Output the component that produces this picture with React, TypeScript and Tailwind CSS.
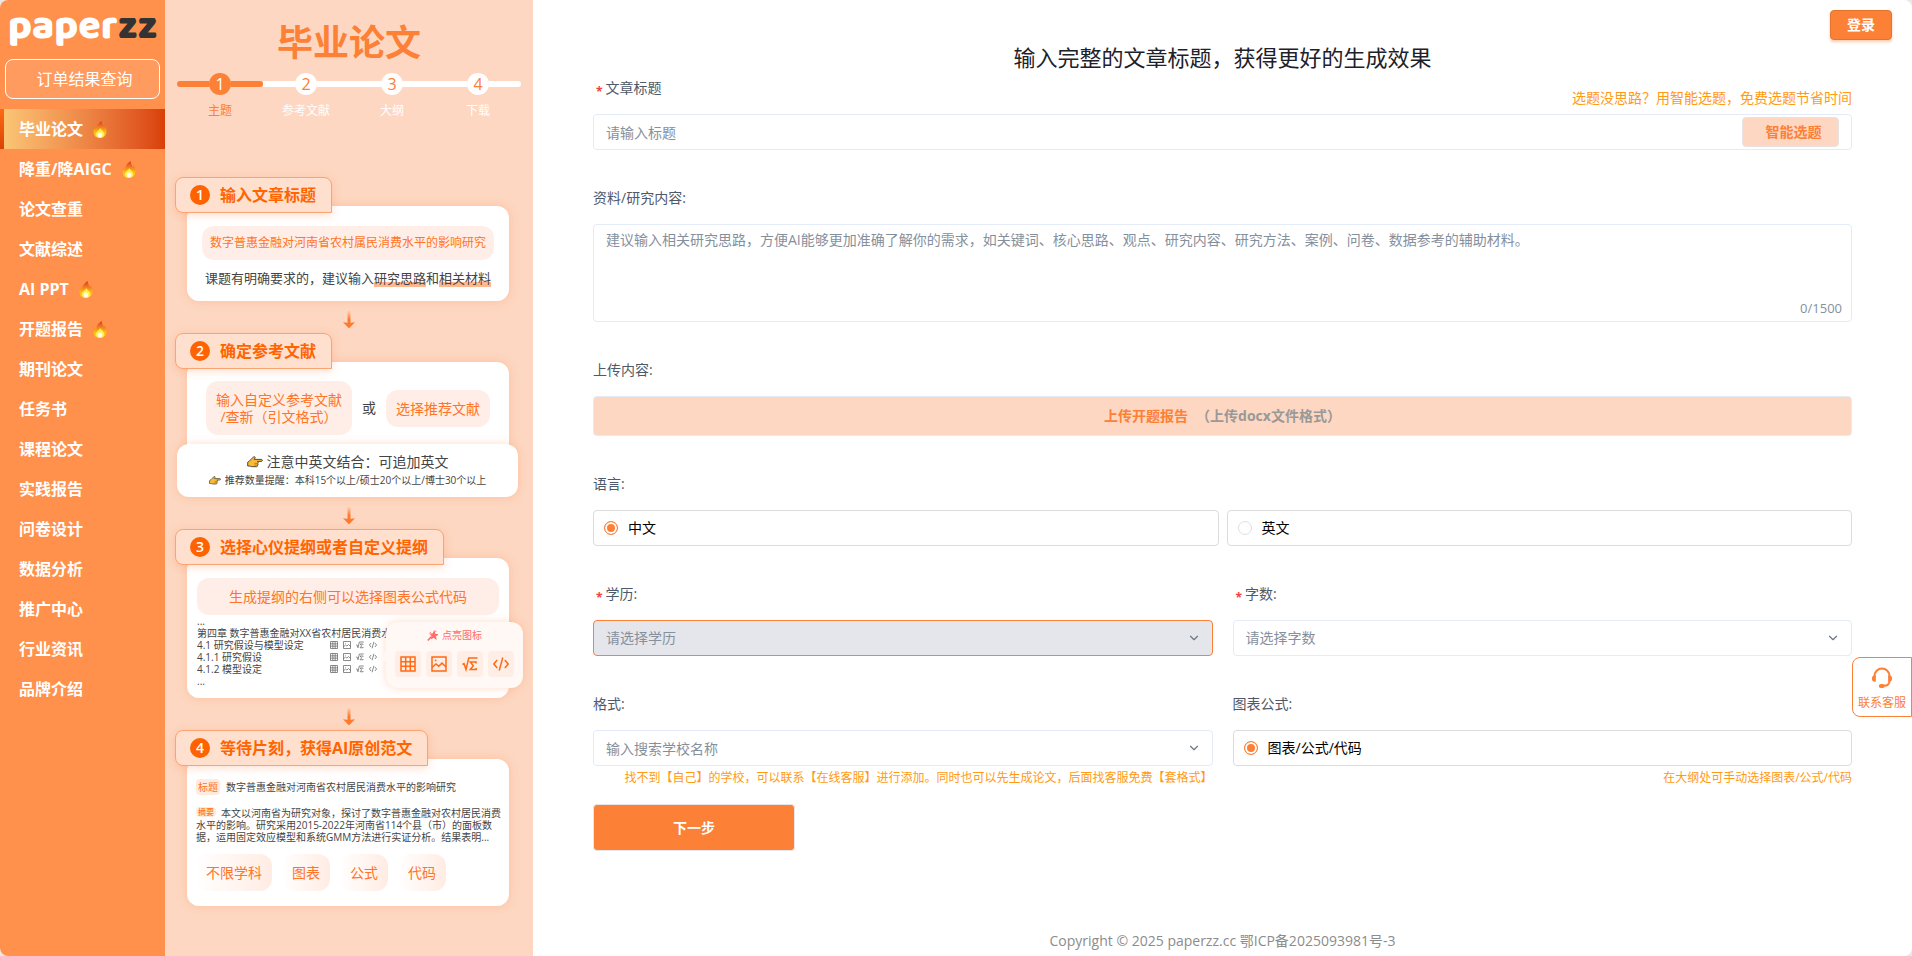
import { useState } from "react";
import type { ReactNode } from "react";
import { ChevronDown } from "lucide-react";
import clsx from "clsx";

const MENU = [
  { label: "毕业论文", hot: true },
  { label: "降重/降AIGC", hot: true },
  { label: "论文查重" },
  { label: "文献综述" },
  { label: "AI PPT", hot: true },
  { label: "开题报告", hot: true },
  { label: "期刊论文" },
  { label: "任务书" },
  { label: "课程论文" },
  { label: "实践报告" },
  { label: "问卷设计" },
  { label: "数据分析" },
  { label: "推广中心" },
  { label: "行业资讯" },
  { label: "品牌介绍" },
];

const STEPS = ["主题", "参考文献", "大纲", "下载"];

const OUTLINE = [
  "4.1 研究假设与模型设定",
  "4.1.1 研究假设",
  "4.1.2 模型设定",
];

/* ---------- Icons ---------- */

function FireIcon() {
  return (
    <svg viewBox="0 0 14 17" className="h-[17px] w-[14px]" aria-hidden="true">
      <defs>
        <linearGradient id="fire" x1="0" y1="0" x2="0" y2="1">
          <stop offset="0" stopColor="#d8362a" />
          <stop offset="0.4" stopColor="#f3861c" />
          <stop offset="0.65" stopColor="#fdbb12" />
          <stop offset="1" stopColor="#fdd835" />
        </linearGradient>
      </defs>
      <path
        d="M8.6 0C9 2.6 9.600 4 11 6c.4-.4.6-.9.6-1.600C13 6.200 13.600 8.400 13.500 10.500 13.300 14.500 10.600 17 7 17S.5 14.500.500 10.900c0-1.800.5-3.200 1.100-4.300.3.9.7 1.500 1.300 1.900C3.200 4.800 5.200 2.200 8.600 0z"
        fill="url(#fire)"
      />
      <path
        d="M7.200 7c.3 1.500 4 3 4 6.200 0 2.200-1.900 3.600-4.100 3.600S2.900 15.400 2.900 13.300C2.900 10.700 6.600 9.400 7.200 7z"
        fill="#fff04d"
      />
      <ellipse cx="7" cy="14" rx="2.300" ry="2.400" fill="#fffdf0" />
    </svg>
  );
}

function HandIcon({ className }: { className: string }) {
  return (
    <svg viewBox="0 0 16 12" className={className} aria-hidden="true">
      <path
        d="M.700 6.200c1.600-.6 2.300-1.800 3.400-3C5 2.200 6.300.900 7.300.700c.8-.1 1.100.7.700 1.400L7.200 3.400h7.100c1.400 0 1.400 2 0 2H10.500c.9.300 1 1.500.2 1.900.7.400.6 1.600-.2 1.800.3.700-.1 1.600-1.100 1.600H5.200c-1.500 0-2-.8-4.500-.7z"
        fill="#fcb932"
        stroke="#3a3a3a"
        strokeWidth="0.900"
        strokeLinejoin="round"
      />
      <path d="M7.500 7.300h3M7.300 9.100h3" stroke="#8a5a10" strokeWidth="0.600" />
    </svg>
  );
}

function TableIcon({ className }: { className: string }) {
  return (
    <svg viewBox="0 0 16 16" className={className} fill="none" stroke="currentColor" strokeWidth="1.500" aria-hidden="true">
      <path d="M1 1h14v14H1zM1 5.700h14M1 10.300h14M5.700 1v14M10.300 1v14" />
    </svg>
  );
}

function PictureIcon({ className }: { className: string }) {
  return (
    <svg viewBox="0 0 16 16" className={className} fill="none" stroke="currentColor" strokeWidth="1.500" aria-hidden="true">
      <path d="M1 1h14v14H1z" />
      <path d="M1 11.500 5 8l2.800 2.200L11 7l4 4" />
      <circle cx="4.600" cy="4.400" r="0.900" fill="currentColor" stroke="none" />
    </svg>
  );
}

function FormulaIcon({ className }: { className: string }) {
  return (
    <svg viewBox="0 0 16 16" className={className} fill="none" stroke="currentColor" strokeWidth="1.500" aria-hidden="true">
      <path d="M.5 8.500 2 7.700l2 5.800L6.700 2H15.500" />
      <path d="M14 7.500V6H8.300l3 3.700-3 3.800H14.200V12" />
    </svg>
  );
}

function CodeIcon({ className }: { className: string }) {
  return (
    <svg viewBox="0 0 16 16" className={className} fill="none" stroke="currentColor" strokeWidth="1.500" aria-hidden="true">
      <path d="M4.200 4 .8 8l3.400 4M11.800 4l3.400 4-3.400 4M9.800 1.500 6.200 14.500" />
    </svg>
  );
}

function WandIcon() {
  return (
    <svg viewBox="0 0 12 12" className="size-[11px] text-[#fe6c6c]" fill="none" stroke="currentColor" strokeWidth="1.300" aria-hidden="true">
      <path d="M.8 11.400 5 7" strokeWidth="1.700" />
      <path d="M4 4.500h2.500l1.300-2.800.8 2.900 2.800.4-2.300 1.600.6 2.900-2.300-1.600L5 9l.8-2.600z" fill="currentColor" />
      <path d="M3.200 2.300 4 3M10 1l-.6.9" />
    </svg>
  );
}

function HeadsetIcon() {
  return (
    <svg viewBox="0 0 22 22" className="size-[22px]" aria-hidden="true">
      <path
        d="M3.500 10.500V9a7.500 7.500 0 0 1 15 0v4.500c0 3.200-2 5.300-5.500 5.300"
        fill="none"
        stroke="currentColor"
        strokeWidth="2"
      />
      <path
        d="M3.500 8.200h1.300v6.600H3.500C2 14.800.9 13.500.9 11.500S2 8.200 3.500 8.200zM18.500 8.200h-1.300v6.600h1.300c1.500 0 2.600-1.300 2.600-3.300s-1.100-3.300-2.600-3.300z"
        fill="currentColor"
      />
      <rect x="7.800" y="17" width="6" height="4" rx="2" fill="currentColor" />
    </svg>
  );
}

function DownArrow() {
  return (
    <svg viewBox="0 0 12 17" className="mx-auto mt-[10px] mb-[5px] h-[17px] w-3" aria-hidden="true">
      <defs>
        <linearGradient id="arrow" x1="0" y1="0" x2="0" y2="1">
          <stop offset="0" stopColor="#ff7a2c" stopOpacity="0.1" />
          <stop offset="0.7" stopColor="#ff7a2c" />
        </linearGradient>
      </defs>
      <path d="M4.500 0h3v12h-3z" fill="url(#arrow)" />
      <path d="M0 11.200 6 12l6-.8L6.600 16.700a.8.8 0 0 1-1.200 0z" fill="#ff7a2c" />
    </svg>
  );
}

/* ---------- Sidebar ---------- */

function Sidebar() {
  return (
    <aside className="w-[165px] shrink-0 bg-[#ff914d]">
      <a
        href="#"
        className="block h-[59px] pl-[8px] font-['Baloo_2','Open_Sans',sans-serif] text-[41px] leading-[53px] font-extrabold text-white"
      >
        paper<span className="text-[#333333]">zz</span>
      </a>
      <button className="mx-[5px] h-10 w-[155px] rounded-lg border border-white bg-[#ff9b5f] pl-1 text-base text-white">
        订单结果查询
      </button>
      <nav className="mt-[10px]">
        {MENU.map((item, i) => (
          <a
            key={item.label}
            href="#"
            className={clsx(
              "flex h-10 items-center gap-[10px] text-base font-bold text-white",
              i === 0 && "bg-linear-to-r from-[#fbc878] to-[#d93f06]",
            )}
          >
            <span
              className={clsx(
                "h-full w-1",
                i === 0 && "bg-linear-to-b from-[#fd6a12] to-[#db4206]",
              )}
            />
            <span className="pl-[5px]">{item.label}</span>
            {item.hot && <FireIcon />}
          </a>
        ))}
      </nav>
    </aside>
  );
}

/* ---------- Guide panel ---------- */

function Stepper() {
  return (
    <ol className="mx-3 mt-2 flex">
      {STEPS.map((step, i) => (
        <li key={step} className="flex-1">
          <div className="flex items-center">
            <span
              className={clsx(
                "h-1.5 flex-1",
                i === 0 ? "rounded-l-full bg-[#fc8036]" : "bg-white",
              )}
            />
            <span
              className={clsx(
                "flex size-[22px] items-center justify-center rounded-full text-base leading-none",
                i === 0 ? "bg-[#fc8036] text-white" : "bg-white text-[#fc8036]",
              )}
            >
              {i + 1}
            </span>
            <span
              className={clsx(
                "h-1.5 flex-1",
                i === 0 ? "rounded-r-full bg-[#fc8036]" : "bg-white",
                i === STEPS.length - 1 && "rounded-r-full",
              )}
            />
          </div>
          <p
            className={clsx(
              "mt-2 text-center text-xs leading-4",
              i === 0 ? "text-[#fc8036]" : "text-white",
            )}
          >
            {step}
          </p>
        </li>
      ))}
    </ol>
  );
}

interface GuideCardProps {
  index: number;
  title: string;
  className?: string;
  children: ReactNode;
}

function GuideCard({ index, title, className, children }: GuideCardProps) {
  return (
    <section>
      <h2 className="relative z-10 ml-[10px] flex h-9 w-fit items-center gap-[10px] rounded-t-lg rounded-bl-lg border border-[#fba473] bg-[#ffdfcd] pr-[15px] pl-[14px] text-base font-bold text-[#ff6400] shadow-[0_2px_8px_rgba(255,120,50,0.25)]">
        <span className="flex size-5 items-center justify-center rounded-full bg-[#ff6200] text-sm leading-none font-semibold text-white">
          {index}
        </span>
        {title}
      </h2>
      <div
        className={clsx(
          "relative mr-6 ml-[22px] -mt-[7px] rounded-xl bg-white shadow-[0_0_10px_rgba(255,140,80,0.3)]",
          className,
        )}
      >
        {children}
      </div>
    </section>
  );
}

function GuidePanel() {
  return (
    <div className="w-[368px] shrink-0 bg-[#fdd7c1] pt-[21px]">
      <h1 className="text-center text-4xl leading-[44px] font-bold text-[#fc8036]">
        毕业论文
      </h1>
      <Stepper />

      <div className="mt-[58px] text-[#444444]">
        <GuideCard index={1} title="输入文章标题" className="pt-5 pb-[13px] text-center">
          <p className="mx-[15px] rounded-xl bg-[#ffeee7] text-xs leading-[34px] text-[#ff7426]">
            数字普惠金融对河南省农村属民消费水平的影响研究
          </p>
          <p className="mt-2 text-[13px] leading-5">
            课题有明确要求的，建议输入
            <span className="bg-linear-to-t from-[#ffb78f] from-25% to-transparent to-25%">研究思路</span>
            和
            <span className="bg-linear-to-t from-[#ffb78f] from-25% to-transparent to-25%">相关材料</span>
          </p>
        </GuideCard>
        <DownArrow />

        <GuideCard index={2} title="确定参考文献" className="pt-[19px] pb-5">
          <div className="flex items-center justify-center gap-[10px] text-sm text-[#ff7426]">
            <p className="rounded-xl bg-[#ffeee7] px-[10px] py-[10px] text-center leading-[17px]">
              输入自定义参考文献
              <br />
              /查新（引文格式）
            </p>
            <span className="text-[#444444]">或</span>
            <p className="rounded-xl bg-[#ffeee7] px-[10px] leading-[37px]">
              选择推荐文献
            </p>
          </div>
        </GuideCard>
        <div className="relative mr-[15px] ml-3 -mt-[11px] rounded-xl bg-white pt-[9px] pb-2 shadow-[0_0_8px_rgba(255,140,80,0.3)]">
          <p className="flex items-center justify-center gap-1 text-sm leading-[18px]">
            <HandIcon className="h-3 w-4" />
            注意中英文结合：可追加英文
          </p>
          <p className="flex items-center justify-center gap-1 text-[10px] leading-[18px]">
            <HandIcon className="h-[9px] w-3" />
            推荐数量提醒：本科15个以上/硕士20个以上/博士30个以上
          </p>
        </div>
        <DownArrow />

        <GuideCard index={3} title="选择心仪提纲或者自定义提纲" className="px-[10px] pt-5 pb-[11px]">
          <p className="rounded-xl bg-[#ffeee7] text-center text-sm leading-[37px] text-[#ff7426]">
            生成提纲的右侧可以选择图表公式代码
          </p>
          <div className="text-[10px] leading-3">
            <p>...</p>
            <p className="w-[190px] overflow-hidden whitespace-nowrap">
              第四章 数字普惠金融对XX省农村居民消费水
            </p>
            {OUTLINE.map((line) => (
              <div key={line} className="flex w-[180px] items-center justify-between">
                <span>{line}</span>
                <span className="flex gap-[5px] text-[#666666]">
                  <TableIcon className="size-2" />
                  <PictureIcon className="size-2" />
                  <FormulaIcon className="size-2" />
                  <CodeIcon className="size-2" />
                </span>
              </div>
            ))}
            <p>...</p>
          </div>
          {/* Floating icon picker */}
          <div className="absolute top-16 -right-[14px] h-[66px] w-[137px] rounded-xl bg-[#fff8f4] shadow-[0_0_8px_rgba(255,140,80,0.3)]">
            <span className="absolute top-[30px] -left-[6px] border-y-[5px] border-r-[6px] border-y-transparent border-r-[#fff8f4]" />
            <p className="mt-[5px] flex items-center justify-center gap-1 text-[10px] leading-4 text-[#fe6c6c]">
              <WandIcon />
              点亮图标
            </p>
            <div className="mt-2 flex justify-center gap-[5px] text-[#ff6a13]">
              <span className="flex size-[26px] items-center justify-center rounded-sm bg-[#ffeee6]">
                <TableIcon className="size-4" />
              </span>
              <span className="flex size-[26px] items-center justify-center rounded-sm bg-[#ffeee6]">
                <PictureIcon className="size-4" />
              </span>
              <span className="flex size-[26px] items-center justify-center rounded-sm bg-[#ffeee6]">
                <FormulaIcon className="size-4" />
              </span>
              <span className="flex size-[26px] items-center justify-center rounded-sm bg-[#ffeee6]">
                <CodeIcon className="size-4" />
              </span>
            </div>
          </div>
        </GuideCard>
        <DownArrow />

        <GuideCard index={4} title="等待片刻，获得AI原创范文" className="pt-5 pr-[7px] pb-[15px] pl-[9px]">
          <p className="flex gap-1.5 text-[10px] leading-4">
            <span className="rounded-sm bg-[#ffeae0] px-0.5 text-[#ff7426]">标题</span>
            数字普惠金融对河南省农村居民消费水平的影响研究
          </p>
          <p className="mt-3 text-[10px] leading-3">
            <span className="mr-[5px] inline-block rounded-sm bg-[#ffeae0] px-0.5 align-top text-[8px] leading-[10px] font-medium text-[#ff7426]">
              摘要
            </span>
            本文以河南省为研究对象，探讨了数字普惠金融对农村居民消费水平的影响。研究采用2015-2022年河南省114个县（市）的面板数据，运用固定效应模型和系统GMM方法进行实证分析。结果表明...
          </p>
          <div className="mt-[11px] flex gap-[10px] text-sm leading-[37px] text-[#ff7426]">
            {["不限学科", "图表", "公式", "代码"].map((tag) => (
              <span
                key={tag}
                className="rounded-xl bg-linear-to-r from-white to-[#ffece3] px-[10px]"
              >
                {tag}
              </span>
            ))}
          </div>
        </GuideCard>
      </div>
    </div>
  );
}

/* ---------- Form ---------- */

interface FieldProps {
  label: string;
  htmlFor?: string;
  required?: boolean;
  hint?: string;
  children: ReactNode;
}

function Field({ label, htmlFor, required, hint, children }: FieldProps) {
  return (
    <div>
      <div className="mb-[10px] flex h-8 items-center justify-between">
        <label htmlFor={htmlFor} className="flex items-center text-sm text-[#4e5969]">
          {required && <span className="mr-[3px] ml-[3px] pt-2 text-xs leading-none font-bold text-[#f53f3f]">*</span>}
          {label}
        </label>
        {hint && (
          <span className="self-end text-sm leading-3 text-[#ff9a14]">{hint}</span>
        )}
      </div>
      {children}
    </div>
  );
}

interface RadioBoxProps {
  label: string;
  name: string;
  checked: boolean;
  onSelect: () => void;
}

function RadioBox({ label, name, checked, onSelect }: RadioBoxProps) {
  return (
    <label className="flex h-9 items-center gap-[10px] rounded border border-[#dcdcdc] px-[10px] text-sm text-black">
      <input
        type="radio"
        name={name}
        checked={checked}
        onChange={onSelect}
        className="size-[14px] appearance-none rounded-full border border-[#dcdfe6] bg-white checked:border-[#fc8036] checked:bg-[#fc8036] checked:shadow-[inset_0_0_0_2px_white]"
      />
      {label}
    </label>
  );
}

interface SelectBoxProps {
  id: string;
  placeholder: string;
  active?: boolean;
}

function SelectBox({ id, placeholder, active }: SelectBoxProps) {
  return (
    <div className="relative">
      <select
        id={id}
        className={clsx(
          "block h-9 w-full appearance-none rounded-sm border px-3 text-sm text-[#86909c] outline-none",
          active ? "border-[#fc8036] bg-[#e5e6eb]" : "border-[#e4ebf8] bg-white",
        )}
      >
        <option>{placeholder}</option>
      </select>
      <ChevronDown className="pointer-events-none absolute top-[11px] right-3 size-[14px] text-[#6b7785]" />
    </div>
  );
}

function PaperForm() {
  const [lang, setLang] = useState("中文");
  const [content, setContent] = useState("");

  return (
    <form className="flex flex-col gap-8 px-[60px]" onSubmit={(e) => e.preventDefault()}>
      <Field
        label="文章标题"
        htmlFor="title"
        required
        hint="选题没思路？用智能选题，免费选题节省时间"
      >
        <div className="flex h-9 items-center rounded-sm border border-[#e4ebf8] pr-3">
          <input
            id="title"
            placeholder="请输入标题"
            className="h-full flex-1 px-3 text-sm outline-none placeholder:text-[#86909c]"
          />
          <button
            type="button"
            className="h-[30px] w-[97px] rounded border border-[#e8e3e2] bg-[#fdd7c1] pl-1.5 text-sm font-bold text-[#fc8036]"
          >
            智能选题
          </button>
        </div>
      </Field>

      <Field label="资料/研究内容:" htmlFor="content">
        <div className="relative">
          <textarea
            id="content"
            maxLength={1500}
            value={content}
            onChange={(e) => setContent(e.target.value)}
            placeholder="建议输入相关研究思路，方便AI能够更加准确了解你的需求，如关键词、核心思路、观点、研究内容、研究方法、案例、问卷、数据参考的辅助材料。"
            className="block h-[98px] w-full resize-none rounded-sm border border-[#e4ebf8] px-3 py-1 text-sm leading-[22px] outline-none placeholder:text-[#86909c]"
          />
          <span className="absolute right-[10px] bottom-1 text-[13px] leading-5 text-[#86909c]">
            {content.length}/1500
          </span>
        </div>
      </Field>

      <Field label="上传内容:" htmlFor="upload">
        <button
          id="upload"
          type="button"
          className="block h-10 w-full rounded border border-[#e4ebf3] bg-[#fdd7c1] text-sm font-bold text-[#999999]"
        >
          <span className="mr-2 text-[#fc8036]">上传开题报告</span>
          （上传docx文件格式）
        </button>
      </Field>

      <Field label="语言:">
        <div className="grid grid-cols-2 gap-2">
          {["中文", "英文"].map((item) => (
            <RadioBox
              key={item}
              name="lang"
              label={item}
              checked={lang === item}
              onSelect={() => setLang(item)}
            />
          ))}
        </div>
      </Field>

      <div className="grid grid-cols-2 gap-5">
        <Field label="学历:" htmlFor="degree" required>
          <SelectBox id="degree" placeholder="请选择学历" active />
        </Field>
        <Field label="字数:" htmlFor="words" required>
          <SelectBox id="words" placeholder="请选择字数" />
        </Field>
      </div>

      <div className="grid grid-cols-2 gap-5 text-right text-xs leading-4 text-[#ff9a14]">
        <Field label="格式:" htmlFor="school">
          <div className="relative">
            <input
              id="school"
              placeholder="输入搜索学校名称"
              className="block h-9 w-full rounded-sm border border-[#e4ebf8] px-3 text-sm text-black outline-none placeholder:text-[#86909c]"
            />
            <ChevronDown className="pointer-events-none absolute top-[11px] right-3 size-[14px] text-[#6b7785]" />
          </div>
          <p className="mt-1">
            找不到【自己】的学校，可以联系【在线客服】进行添加。同时也可以先生成论文，后面找客服免费【套格式】
          </p>
        </Field>
        <Field label="图表公式:">
          <RadioBox name="chart" label="图表/公式/代码" checked onSelect={() => {}} />
          <p className="mt-1">在大纲处可手动选择图表/公式/代码</p>
        </Field>
      </div>

      <button className="-mt-[14px] h-[47px] w-[202px] rounded border border-[#e5e6eb] bg-[#fc8036] text-sm font-bold text-white">
        下一步
      </button>
    </form>
  );
}

export default function App() {
  return (
    <div className="min-h-screen bg-[#e8e8e8] font-['Open_Sans','Noto_Sans_CJK_SC',sans-serif]">
      <div className="flex min-h-screen overflow-hidden rounded-lg bg-white">
        <Sidebar />
        <GuidePanel />

        {/* Main Content */}
        <main className="flex flex-1 flex-col">
          <div className="flex justify-end pt-[10px] pr-5">
            <button className="h-[30px] rounded border border-[#e2742f] bg-[#fc8036] px-4 text-sm font-bold text-white shadow-[0_2px_3px_rgba(252,128,54,0.4)]">
              登录
            </button>
          </div>
          <h2 className="mt-[3px] pb-px text-center text-[22px] leading-7 text-[#1d2129]">
            输入完整的文章标题，获得更好的生成效果
          </h2>
          <PaperForm />
          <footer className="mt-auto pb-[5px] text-center text-sm leading-5 text-[#8c8c8c]">
            Copyright © 2025 paperzz.cc 鄂ICP备2025093981号-3
          </footer>
        </main>
      </div>

      {/* Contact support */}
      <button className="fixed right-0 bottom-[239px] flex h-[60px] w-[60px] flex-col items-center rounded-l-lg border border-[#fc8036] bg-white pt-[9px] text-xs text-[#fc8036]">
        <HeadsetIcon />
        <span className="mt-1 leading-5">联系客服</span>
      </button>
    </div>
  );
}
